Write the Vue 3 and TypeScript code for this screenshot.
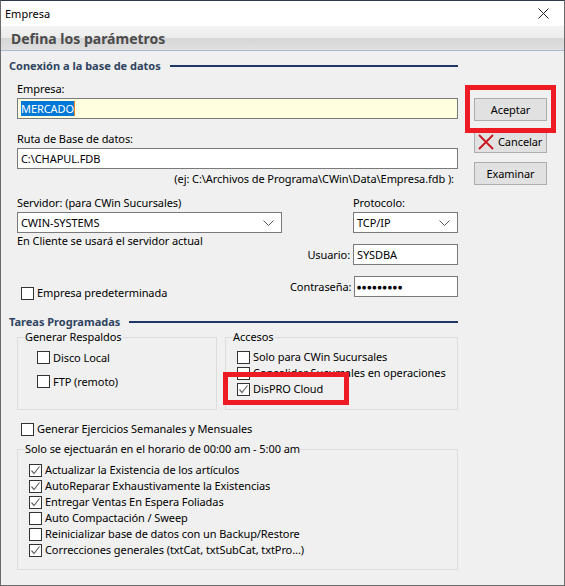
<script setup lang="ts">
const respaldos = [
  { label: 'Disco Local', on: false },
  { label: 'FTP (remoto)', on: false },
];
const accesos = [
  { label: 'Solo para CWin Sucursales', on: false },
  { label: 'Consolidar Sucursales en operaciones', on: false },
  { label: 'DisPRO Cloud', on: true },
];
const tareas = [
  { label: 'Actualizar la Existencia de los artículos', on: true },
  { label: 'AutoReparar Exhaustivamente la Existencias', on: true },
  { label: 'Entregar Ventas En Espera Foliadas', on: true },
  { label: 'Auto Compactación / Sweep', on: false },
  { label: 'Reinicializar base de datos con un Backup/Restore', on: false },
  { label: 'Correcciones generales (txtCat, txtSubCat, txtPro...)', on: true },
];
</script>

<template>
  <div class="window">
    <div class="titlebar">
      <span>Empresa</span>
      <svg class="close" width="11" height="11" viewBox="0 0 11 11">
        <path d="M0.5 0.5L10.5 10.5M10.5 0.5L0.5 10.5" stroke="#222" fill="none" />
      </svg>
    </div>
    <div class="banner">Defina los parámetros</div>

    <div class="content">
      <div class="form">
        <div class="section"><span>Conexión a la base de datos</span><i></i></div>

        <label class="lbl first">Empresa:</label>
        <div class="field yellow"><span class="sel">MERCADO</span></div>

        <label class="lbl ruta">Ruta de Base de datos:</label>
        <div class="field">C:\CHAPUL.FDB</div>
        <div class="hint">(ej: C:\Archivos de Programa\CWin\Data\Empresa.fdb ):</div>

        <div class="server">
          <div class="srv-left">
            <label class="lbl">Servidor: (para CWin Sucursales)</label>
            <div class="field combo">
              CWIN-SYSTEMS
              <svg width="11" height="6" viewBox="0 0 11 6"><path d="M0.5 0.5L5.5 5.5L10.5 0.5" stroke="#555" fill="none" /></svg>
            </div>
            <div class="note">En Cliente se usará el servidor actual</div>
            <div class="check predet">
              <span class="box"></span><span>Empresa predeterminada</span>
            </div>
          </div>
          <div class="srv-right">
            <label class="lbl">Protocolo:</label>
            <div class="field combo">
              TCP/IP
              <svg width="11" height="6" viewBox="0 0 11 6"><path d="M0.5 0.5L5.5 5.5L10.5 0.5" stroke="#555" fill="none" /></svg>
            </div>
            <div class="pair user">
              <label>Usuario:</label>
              <div class="field">SYSDBA</div>
            </div>
            <div class="pair pass">
              <label>Contraseña:</label>
              <div class="field dots">●●●●●●●●●</div>
            </div>
          </div>
        </div>

        <div class="section tareas"><span>Tareas Programadas</span><i></i></div>

        <div class="groups">
          <fieldset class="group resp">
            <legend>Generar Respaldos</legend>
            <div v-for="r in respaldos" :key="r.label" class="check">
              <span class="box"></span><span>{{ r.label }}</span>
            </div>
          </fieldset>
          <fieldset class="group acc">
            <legend>Accesos</legend>
            <div v-for="a in accesos" :key="a.label" class="check">
              <span class="box">
                <svg v-if="a.on" width="11" height="11" viewBox="0 0 11 11"><path d="M1.5 5.5L4 8.5L9.5 1.5" stroke="#666" stroke-width="1.2" fill="none" /></svg>
              </span>
              <span>{{ a.label }}</span>
            </div>
          </fieldset>
        </div>

        <div class="check semanal">
          <span class="box"></span><span>Generar Ejercicios Semanales y Mensuales</span>
        </div>

        <fieldset class="group sched">
          <legend>Solo se ejectuarán en el horario de 00:00 am - 5:00 am</legend>
          <div v-for="t in tareas" :key="t.label" class="check">
            <span class="box">
              <svg v-if="t.on" width="11" height="11" viewBox="0 0 11 11"><path d="M1.5 5.5L4 8.5L9.5 1.5" stroke="#666" stroke-width="1.2" fill="none" /></svg>
            </span>
            <span>{{ t.label }}</span>
          </div>
        </fieldset>
      </div>

      <div class="side">
        <button class="btn">Aceptar</button>
        <button class="btn cancel">
          <svg width="16" height="16" viewBox="0 0 16 16"><path d="M1 1L15 15M15 1L1 15" stroke="#c8141c" stroke-width="1.8" fill="none" /></svg>
          Cancelar
        </button>
        <button class="btn">Examinar</button>
      </div>
    </div>

    <div class="mark mark-ok"></div>
    <div class="mark mark-cloud"></div>
  </div>
</template>

<style>
html, body { margin: 0; background: #f0f0f0; }
</style>

<style scoped>
.window {
  position: relative;
  width: 565px;
  height: 586px;
  box-sizing: border-box;
  overflow: hidden;
  background: #f0f0f0;
  border-top: 1px solid #2f3b4a;
  border-left: 1px solid #6b6b6b;
  border-right: 1px solid #6b6b6b;
  border-bottom: 1px solid #6b6b6b;
  font: 11px/14px "Noto Sans", sans-serif;
  letter-spacing: -0.08px;
  color: #000;
}
.titlebar {
  height: 25px;
  background: #fff;
  display: flex;
  align-items: center;
  justify-content: space-between;
  padding: 0 15px 0 4px;
  font-size: 11px;
  letter-spacing: 0;
}
.banner {
  height: 25px;
  box-sizing: border-box;
  padding: 4px 0 0 10px;
  border-bottom: 1px solid #a9bbd2;
  background: linear-gradient(#f4f4f4 0, #ececec 48%, #d6d6d6 50%, #e0e0e0 100%);
  font-size: 14px;
  font-weight: 700;
  line-height: 17px;
  letter-spacing: 0;
  color: #4b4b4b;
}
.content { display: flex; padding-left: 8px; }
.form { width: 449px; }
.section {
  display: flex;
  align-items: center;
  height: 16px;
  margin-top: 7px;
  font-size: 11px;
  font-weight: 700;
  letter-spacing: 0;
  color: #2f4460;
}
.section i { flex: 1; height: 2px; margin-left: 9px; background: #1f3864; }
.lbl { display: block; height: 14px; }
.first { margin: 8px 0 2px 8px; }
.ruta { margin: 13px 0 2px 8px; }
.field {
  box-sizing: border-box;
  height: 21px;
  margin-left: 8px;
  padding: 2px 3px;
  border: 1px solid #7a7a7a;
  background: #fff;
  line-height: 15px;
}
.yellow { background: #ffffe0; }
.sel { display: inline-block; background: #0078d7; color: #fff; border-right: 1px solid #f08020; }
.hint { margin: 3px 4px 0 0; text-align: right; height: 14px; }
.server { display: flex; margin-top: 10px; margin-left: 8px; }
.srv-left { width: 265px; }
.srv-left .field { margin-left: 0; }
.srv-left .lbl, .srv-right .lbl { margin-bottom: 2px; }
.srv-right { width: 168px; margin-left: 8px; display: flex; flex-direction: column; }
.srv-right .lbl { margin-left: 63px; }
.srv-right > .field { margin-left: 63px; }
.combo { display: flex; align-items: center; justify-content: space-between; padding-right: 7px; }
.note { margin-top: 1px; height: 14px; }
.pair { display: flex; align-items: center; justify-content: flex-end; }
.pair .field { width: 105px; margin-left: 3px; }
.user { margin-top: 11px; }
.pass { margin-top: 11px; }
.dots { font-size: 8.5px; letter-spacing: 0; padding-left: 1px; }
.check { display: flex; align-items: center; gap: 3px; height: 16px; white-space: nowrap; }
.box {
  box-sizing: border-box;
  display: flex;
  width: 13px;
  height: 13px;
  align-items: center;
  justify-content: center;
  border: 1px solid #333;
  background: #fff;
  flex: none;
}
.predet { margin: 37px 0 0 4px; }
.tareas { margin-top: 13px; }
.groups { display: flex; gap: 8px; margin: 0 0 0 8px; }
.group {
  box-sizing: border-box;
  margin: 0;
  padding: 0;
  min-width: 0;
  border: 1px solid #dcdcdc;
}
.group legend { margin-left: 7px; padding: 0; line-height: 14px; height: 14px; }
.resp { width: 201px; height: 80px; padding-top: 7px; }
.resp .check { height: 13px; margin: 0 0 11px 19px; }
.acc { width: 234px; height: 80px; padding-top: 5px; }
.acc .check { margin-left: 11px; }
.semanal { margin: 11px 0 0 12px; }
.sched { width: 441px; height: 128px; margin: 5px 0 0 8px; padding-top: 6px; }
.sched .check { margin-left: 11px; }
.side { display: flex; flex-direction: column; margin: 47px 0 0 16px; width: 73px; gap: 9px; }
.btn {
  box-sizing: border-box;
  height: 23px;
  width: 73px;
  padding: 0;
  display: flex;
  align-items: center;
  justify-content: center;
  gap: 4px;
  border: 1px solid #adadad;
  background: #e1e1e1;
  font: inherit;
  letter-spacing: inherit;
  color: inherit;
}
.cancel { justify-content: flex-start; padding-left: 3px; }
.mark { position: absolute; box-sizing: border-box; border: 5px solid #ed1c24; }
.mark-ok { left: 464px; top: 84px; width: 91px; height: 48px; }
.mark-cloud { left: 222px; top: 371px; width: 126px; height: 33px; }
</style>
